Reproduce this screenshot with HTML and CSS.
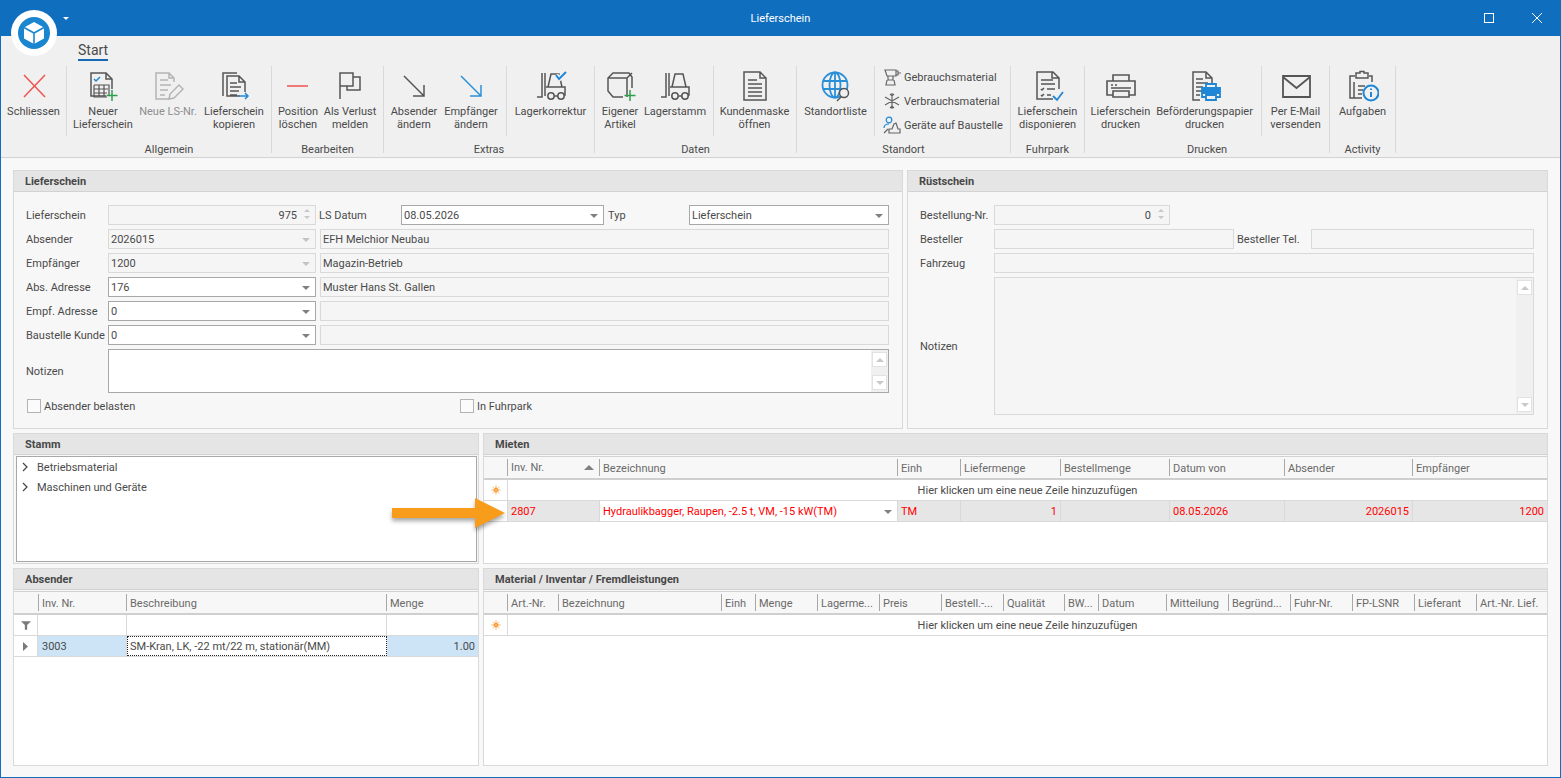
FILE: index.html
```html
<!DOCTYPE html>
<html>
<head>
  <meta charset="UTF-8">
  <title>Lieferschein</title>
  <link rel="stylesheet" href="styles.css">
</head>
<body>
  <svg class="sprites" xmlns="http://www.w3.org/2000/svg">
    <symbol id="forklift" viewBox="0 0 32 32">
      <path d="M7 3v24H2M10 3v23M13 17l3-13h8l3 13M11 17h19v8h-1M20 26h3"/>
      <circle cx="16" cy="26" r="3.2"/>
      <circle cx="26" cy="26" r="3.2"/>
    </symbol>
    <symbol id="sun" viewBox="0 0 12 12">
      <circle cx="6" cy="6" r="3" fill="#f7941d" stroke="none"/>
      <path d="M6 0v12M0 6h12M2 2l8 8M10 2l-8 8" stroke="#f9b56b" fill="none"/>
    </symbol>
  </svg>

  <!-- title bar -->
  <header class="titlebar">
    <span></span>
    <span class="title">Lieferschein</span>
    <div class="win-buttons">
      <span class="win-max"></span>
      <svg width="10" height="10" viewBox="0 0 10 10"><path d="M0 0l10 10M10 0L0 10" stroke="#fff" fill="none"/></svg>
    </div>
  </header>

  <!-- app logo over titlebar and ribbon -->
  <svg class="app-logo" width="46" height="46" viewBox="0 0 46 46">
    <circle cx="23" cy="23" r="23" fill="#fff"/>
    <circle cx="23" cy="23" r="16" fill="#1a86d0"/>
    <path d="M23 12l10 5.5v11L23 34l-10-5.5v-11z" fill="#fff"/>
    <path d="M13 17.5L23 23l10-5.5M23 23v11" stroke="#1a86d0" stroke-width="1.6" fill="none"/>
  </svg>
  <span class="app-caret"></span>

  <!-- ribbon -->
  <section class="ribbon">
    <div class="tabs"><span class="tab">Start</span></div>
    <div class="groups">
      <div class="rb-group g-close">
        <div class="rb-items">
          <div class="rb-item">
            <svg class="ic" viewBox="0 0 32 32"><path d="M6 5l21 22M27 5L6 27" stroke="#ef5350"/></svg>
            <span>Schliessen</span>
          </div>
          <i class="rb-sep"></i>
        </div>
      </div>

      <div class="rb-group g-allgemein">
        <div class="rb-items">
          <div class="rb-item">
            <svg class="ic" viewBox="0 0 32 32">
              <path d="M19 26H4V3h15l6 6v10M19 3v6h6"/>
              <path d="M7 15h15v11M7 15v12h13M7 19h14M7 23h13M12 15v11M17 15v11" stroke-width="1.2"/>
              <path d="M7 9l2 2 4-4" stroke="#1f87d6"/>
              <path d="M25 20v11M19.5 25.5h11" stroke="#2e9e4f"/>
            </svg>
            <span>Neuer<br>Lieferschein</span>
          </div>
          <div class="rb-item off">
            <svg class="ic" viewBox="0 0 32 32">
              <path d="M22 12V8l-5-5H4v26h13M17 3v5h5M8 10h8M8 15h11M8 20h8M8 25h5"/>
              <path d="M17 29l1-5 9-9 4 4-9 9z"/>
            </svg>
            <span>Neue LS-Nr.</span>
          </div>
          <div class="rb-item">
            <svg class="ic" viewBox="0 0 32 32">
              <path d="M5 26V3h14"/>
              <path d="M22 26H9V6h12l6 6v10M21 6v6h6M12 13h7M12 17h11M12 21h9M12 25h7"/>
              <path d="M21 26h9M27 23l3 3-3 3" stroke="#1f87d6"/>
            </svg>
            <span>Lieferschein<br>kopieren</span>
          </div>
        </div>
        <div class="rb-label">Allgemein</div>
      </div>

      <div class="rb-group g-bearbeiten">
        <div class="rb-items">
          <div class="rb-item">
            <svg class="ic" viewBox="0 0 32 32"><path d="M5 16h21" stroke="#ef5350"/></svg>
            <span>Position<br>löschen</span>
          </div>
          <div class="rb-item">
            <svg class="ic" viewBox="0 0 32 32"><path d="M6 29V3h13v13H6M19 7h7v13H13v-4"/></svg>
            <span>Als Verlust<br>melden</span>
          </div>
        </div>
        <div class="rb-label">Bearbeiten</div>
      </div>

      <div class="rb-group g-extras">
        <div class="rb-items">
          <div class="rb-item">
            <svg class="ic" viewBox="0 0 32 32"><path d="M6 6l20 20M26 15v11H15"/></svg>
            <span>Absender<br>ändern</span>
          </div>
          <div class="rb-item">
            <svg class="ic" viewBox="0 0 32 32"><path d="M6 6l20 20M26 15v11H15" stroke="#2b8fd8"/></svg>
            <span>Empfänger<br>ändern</span>
          </div>
          <i class="rb-sep"></i>
          <div class="rb-item">
            <svg class="ic" viewBox="0 0 32 32">
              <use href="#forklift"/>
              <path d="M21 5l3 4 7-7" stroke="#f0f0f0" stroke-width="5"/>
              <path d="M21 5l3 4 7-7" stroke="#1f87d6" stroke-width="2"/>
            </svg>
            <span>Lagerkorrektur</span>
          </div>
        </div>
        <div class="rb-label">Extras</div>
      </div>

      <div class="rb-group g-daten">
        <div class="rb-items">
          <div class="rb-item">
            <svg class="ic" viewBox="0 0 32 32">
              <path d="M19 27H9l-5-6V8l5-5h16l3 4v11M4 8h19v19M23 8l5-5"/>
              <path d="M26 20v11M20.500 25.500h11" stroke="#2e9e4f"/>
            </svg>
            <span>Eigener<br>Artikel</span>
          </div>
          <div class="rb-item">
            <svg class="ic" viewBox="0 0 32 32"><use href="#forklift"/></svg>
            <span>Lagerstamm</span>
          </div>
          <i class="rb-sep"></i>
          <div class="rb-item">
            <svg class="ic" viewBox="0 0 32 32">
              <path d="M21 2H5v28h22V8zM21 2v6h6M9 10h9M9 14h14M9 18h14M9 22h14M9 26h14" stroke-width="1.500"/>
            </svg>
            <span>Kundenmaske<br>öffnen</span>
          </div>
        </div>
        <div class="rb-label">Daten</div>
      </div>

      <div class="rb-group g-standort">
        <div class="rb-items">
          <div class="rb-item">
            <svg class="ic" viewBox="0 0 32 32">
              <g stroke="#2b8fd8" stroke-width="1.800">
                <circle cx="15" cy="15" r="12.500"/>
                <ellipse cx="15" cy="15" rx="5.500" ry="12.500"/>
                <path d="M3 11h24M3 19h24M15 2.500v25"/>
              </g>
              <circle cx="24" cy="23" r="4.500" fill="#f0f0f0"/>
              <path d="M21 27l-4 4"/>
            </svg>
            <span>Standortliste</span>
          </div>
          <i class="rb-sep"></i>
          <div class="rb-list">
            <div class="rb-small">
              <svg class="ic-s" viewBox="0 0 18 18"><path d="M2 2h11v6H4zM13 3h2v4h-2M15 5h3M5 8v4h5V8M4 12l-1 5h9l-1-5"/></svg>
              <span>Gebrauchsmaterial</span>
            </div>
            <div class="rb-small">
              <svg class="ic-s" viewBox="0 0 18 18"><path d="M9 1v16M2 5l14 8M16 5L2 13M7 2l2 2 2-2M7 16l2-2 2 2"/></svg>
              <span>Verbrauchsmaterial</span>
            </div>
            <div class="rb-small">
              <svg class="ic-s" viewBox="0 0 18 18">
                <circle cx="6" cy="4" r="2.800" stroke="#1f87d6"/>
                <path d="M1 12c0-3 2-4 5-4" stroke="#1f87d6"/>
                <path d="M6 17h11v-4h-2l-2-6-2 1-2 5H6zM1 17l4-4"/>
              </svg>
              <span>Geräte auf Baustelle</span>
            </div>
          </div>
        </div>
        <div class="rb-label">Standort</div>
      </div>

      <div class="rb-group g-fuhrpark">
        <div class="rb-items">
          <div class="rb-item">
            <svg class="ic" viewBox="0 0 32 32">
              <path d="M21 29H5V2h16l6 6v11M20 2v6h7M9 10h12M9 14h14M9 19l1 1 2-2M15 19h8M9 25l1 1 2-2M15 25h4"/>
              <path d="M21 26l4 4 6-8" stroke="#1f87d6" stroke-width="1.800"/>
            </svg>
            <span>Lieferschein<br>disponieren</span>
          </div>
        </div>
        <div class="rb-label">Fuhrpark</div>
      </div>

      <div class="rb-group g-drucken">
        <div class="rb-items">
          <div class="rb-item">
            <svg class="ic" viewBox="0 0 32 32">
              <path d="M8 11V5h16v6M8 25H2V11h28v14h-6M8 21h16v6H8zM6 15h2M10 15h2M6 18h20" stroke-width="1.600"/>
            </svg>
            <span>Lieferschein<br>drucken</span>
          </div>
          <div class="rb-item">
            <svg class="ic" viewBox="0 0 32 32">
              <path d="M11 30H4V2h13l6 6v6M17 2v6h6M7 9h7M7 13h12M7 17h7M7 21h6M7 25h4"/>
              <path d="M17 18v-4h10v4M17 27h-4v-9h18v9h-4M17 25h10v5H17z" stroke="#1f87d6" stroke-width="1.800"/>
              <path d="M13 19h18v5H13z" fill="#1f87d6" stroke="none"/>
            </svg>
            <span>Beförderungspapier<br>drucken</span>
          </div>
          <i class="rb-sep"></i>
          <div class="rb-item">
            <svg class="ic" viewBox="0 0 32 32">
              <path d="M3 6h27v21H3zM3 7l13.500 11L30 7" stroke-width="1.800"/>
            </svg>
            <span>Per E-Mail<br>versenden</span>
          </div>
        </div>
        <div class="rb-label">Drucken</div>
      </div>

      <div class="rb-group g-activity">
        <div class="rb-items">
          <div class="rb-item">
            <svg class="ic" viewBox="0 0 32 32">
              <path d="M11 28H3V6h5M22 6h3v6M9 3h4V1.500h4V3h4v5H9zM7 28h8M7 12v16"/>
              <path d="M11 16h7M11 20h5M11 24h4"/>
              <circle cx="24" cy="23" r="7.500" stroke="#1f87d6" stroke-width="2" fill="#f0f0f0"/>
              <path d="M24 22v5M24 18.500v1.500" stroke="#1f87d6" stroke-width="2"/>
            </svg>
            <span>Aufgaben</span>
          </div>
        </div>
        <div class="rb-label">Activity</div>
      </div>
    </div>
  </section>

  <main class="content">
    <div class="row-top">
      <!-- Lieferschein -->
      <section class="panel">
        <h3 class="panel-head">Lieferschein</h3>
        <div class="form">
          <div class="form-row">
            <label class="lbl">Lieferschein</label>
            <div class="field off num w-main">975<span class="spin"><i></i><i></i></span></div>
            <label class="lbl lbl-date">LS Datum</label>
            <div class="field combo w-date">08.05.2026</div>
            <label class="lbl lbl-typ">Typ</label>
            <div class="field combo grow">Lieferschein</div>
          </div>
          <div class="form-row">
            <label class="lbl">Absender</label>
            <div class="field off combo w-main">2026015</div>
            <div class="field off grow">EFH Melchior Neubau</div>
          </div>
          <div class="form-row">
            <label class="lbl">Empfänger</label>
            <div class="field off combo w-main">1200</div>
            <div class="field off grow">Magazin-Betrieb</div>
          </div>
          <div class="form-row">
            <label class="lbl">Abs. Adresse</label>
            <div class="field combo w-main">176</div>
            <div class="field off grow">Muster Hans St. Gallen</div>
          </div>
          <div class="form-row">
            <label class="lbl">Empf. Adresse</label>
            <div class="field combo w-main">0</div>
            <div class="field off grow"></div>
          </div>
          <div class="form-row">
            <label class="lbl">Baustelle Kunde</label>
            <div class="field combo w-main">0</div>
            <div class="field off grow"></div>
          </div>
          <div class="form-row notes-short">
            <label class="lbl">Notizen</label>
            <div class="memo grow">
              <div class="memo-bar"><b class="up"></b><b class="down"></b></div>
            </div>
          </div>
          <div class="check-row">
            <label class="check check-first"><i></i>Absender belasten</label>
            <label class="check"><i></i>In Fuhrpark</label>
          </div>
        </div>
      </section>

      <!-- Rüstschein -->
      <section class="panel">
        <h3 class="panel-head">Rüstschein</h3>
        <div class="form">
          <div class="form-row">
            <label class="lbl lbl-r">Bestellung-Nr.</label>
            <div class="field off num w-order">0<span class="spin"><i></i><i></i></span></div>
          </div>
          <div class="form-row tight">
            <label class="lbl lbl-r">Besteller</label>
            <div class="field off w-buyer"></div>
            <label class="lbl lbl-tel">Besteller Tel.</label>
            <div class="field off grow"></div>
          </div>
          <div class="form-row">
            <label class="lbl lbl-r">Fahrzeug</label>
            <div class="field off grow"></div>
          </div>
          <div class="form-row notes-tall">
            <label class="lbl lbl-r">Notizen</label>
            <div class="memo off grow">
              <div class="memo-bar"><b class="up"></b><b class="down"></b></div>
            </div>
          </div>
        </div>
      </section>
    </div>

    <div class="row-mid">
      <section class="panel">
        <h3 class="panel-head">Stamm</h3>
        <div class="tree">
          <div class="tree-item"><svg width="6" height="10" viewBox="0 0 6 10"><path d="M1 1l4 4-4 4" stroke="#444" fill="none" stroke-width="1.200"/></svg>Betriebsmaterial</div>
          <div class="tree-item"><svg width="6" height="10" viewBox="0 0 6 10"><path d="M1 1l4 4-4 4" stroke="#444" fill="none" stroke-width="1.200"/></svg>Maschinen und Geräte</div>
        </div>
      </section>

      <section class="panel">
        <h3 class="panel-head">Mieten</h3>
        <div class="grid">
          <div class="dg-head cols-mieten">
            <div></div>
            <div class="sorted">Inv. Nr.<i class="sort-up"></i></div>
            <div>Bezeichnung</div>
            <div>Einh</div>
            <div>Liefermenge</div>
            <div>Bestellmenge</div>
            <div>Datum von</div>
            <div>Absender</div>
            <div>Empfänger</div>
          </div>
          <div class="dg-new">
            <div class="dg-ind"><svg width="10" height="10"><use href="#sun"/></svg></div>
            <div class="dg-new-text">Hier klicken um eine neue Zeile hinzuzufügen</div>
          </div>
          <div class="dg-row cols-mieten row-red">
            <div class="dg-ind plain"></div>
            <div>2807</div>
            <div class="cell-edit combo-cell">Hydraulikbagger, Raupen, -2.5 t, VM, -15 kW(TM)</div>
            <div>TM</div>
            <div class="right">1</div>
            <div></div>
            <div>08.05.2026</div>
            <div class="right">2026015</div>
            <div class="right">1200</div>
          </div>
        </div>
      </section>
    </div>

    <div class="row-mid row-low">
      <section class="panel">
        <h3 class="panel-head">Absender</h3>
        <div class="grid">
          <div class="dg-head cols-absender">
            <div></div>
            <div>Inv. Nr.</div>
            <div>Beschreibung</div>
            <div>Menge</div>
          </div>
          <div class="dg-row cols-absender row-filter">
            <div class="dg-ind"><svg width="10" height="9" viewBox="0 0 13 11"><path d="M0 0h13L8 5v6H5V5z" fill="#7a7a7a"/></svg></div>
            <div></div><div></div><div></div>
          </div>
          <div class="dg-row cols-absender row-sel">
            <div class="dg-ind"><svg width="5" height="9" viewBox="0 0 5 9"><path d="M0 0l5 4.500L0 9z" fill="#7a7a7a"/></svg></div>
            <div>3003</div>
            <div class="cell-focus">SM-Kran, LK, -22 mt/22 m, stationär(MM)</div>
            <div class="right">1.00</div>
          </div>
        </div>
      </section>

      <section class="panel">
        <h3 class="panel-head">Material / Inventar / Fremdleistungen</h3>
        <div class="grid">
          <div class="dg-head cols-material">
            <div></div>
            <div>Art.-Nr.</div>
            <div>Bezeichnung</div>
            <div>Einh</div>
            <div>Menge</div>
            <div>Lagerme...</div>
            <div>Preis</div>
            <div>Bestell.-...</div>
            <div>Qualität</div>
            <div>BW...</div>
            <div>Datum</div>
            <div>Mitteilung</div>
            <div>Begründ...</div>
            <div>Fuhr-Nr.</div>
            <div>FP-LSNR</div>
            <div>Lieferant</div>
            <div>Art.-Nr. Lief.</div>
          </div>
          <div class="dg-new">
            <div class="dg-ind"><svg width="10" height="10"><use href="#sun"/></svg></div>
            <div class="dg-new-text">Hier klicken um eine neue Zeile hinzuzufügen</div>
          </div>
        </div>
      </section>
    </div>
  </main>

  <!-- callout arrow over the grid -->
  <svg class="callout" width="124" height="44" viewBox="0 0 124 44">
    <path d="M1 14h83V4l30 15-30 15V24H1z" fill="#f89c1c"/>
  </svg>
</body>
</html>
```

FILE: styles.css
```css
:root {
  --blue: #106ebe;
  --text: #4a4a4a;
  --line: #d9d9d9;
  --line-dark: #a8a8a8;
  --head: #e5e5e5;
}

* {
  margin: 0;
  padding: 0;
  box-sizing: border-box;
}

html, body {
  height: 778px;
}

body {
  position: relative;
  background: #f8f8f8;
  color: var(--text);
  font-family: 'Roboto', 'Noto Sans', sans-serif;
  font-size: 11px;
  line-height: 13px;
  border: solid var(--blue);
  border-width: 0 1px 1px;
  overflow: hidden;
}

.sprites {
  display: none;
}

/* title bar */
.titlebar {
  height: 36px;
  margin: 0 -1px;
  background: var(--blue);
  color: #fff;
  display: grid;
  grid-template-columns: 1fr auto 1fr;
  align-items: center;
}

.win-buttons {
  justify-self: end;
  display: flex;
  align-items: center;
  gap: 38px;
  padding-right: 19px;
}

.win-max {
  width: 10px;
  height: 10px;
  border: 1px solid #fff;
}

.app-logo {
  position: absolute;
  left: 10px;
  top: 10px;
}

.app-caret {
  position: absolute;
  left: 62px;
  top: 17px;
  border: 3px solid transparent;
  border-top-color: #fff;
}

/* ribbon */
.ribbon {
  height: 122px;
  background: #f0f0f0;
  border-bottom: 1px solid #d2d2d2;
}

.tabs {
  height: 30px;
  padding: 5px 0 0 77px;
}

.tab {
  display: inline-block;
  height: 20px;
  font-size: 14px;
  line-height: 19px;
  border-bottom: 2px solid #1668b4;
}

.groups {
  display: flex;
  height: 87px;
}

.rb-group {
  border-right: 1px solid var(--line);
}

.g-close { width: 66px; border-right: 0; }
.g-allgemein { width: 205px; }
.g-bearbeiten { width: 112px; }
.g-extras { width: 211px; }
.g-daten { width: 202px; }
.g-standort { width: 214px; }
.g-fuhrpark { width: 74px; }
.g-drucken { width: 245px; }
.g-activity { width: 66px; }

.rb-items {
  display: grid;
  height: 70px;
}

.g-close .rb-items { grid-template-columns: 65px 1px; }
.g-allgemein .rb-items { grid-template-columns: 72px 58px 74px; }
.g-bearbeiten .rb-items { grid-template-columns: 52px 52px; }
.g-extras .rb-items { grid-template-columns: 60px 54px 8px 1px 87px; }
.g-daten .rb-items { grid-template-columns: 50px 60px 8px 1px 81px; }
.g-standort .rb-items { grid-template-columns: 77px 1px 135px; }
.g-fuhrpark .rb-items { grid-template-columns: 73px; }
.g-drucken .rb-items { grid-template-columns: 71px 97px 8px 1px 67px; }
.g-activity .rb-items { grid-template-columns: 65px; }

/* the short separators: the spacer column in front of them stays empty */
.g-extras .rb-sep,
.g-daten .rb-sep,
.g-drucken .rb-sep {
  grid-column: 4;
}

.rb-sep {
  display: block;
  background: var(--line);
}

.rb-item {
  display: flex;
  flex-direction: column;
  align-items: center;
  text-align: center;
  white-space: nowrap;
  padding-top: 4px;
}

.rb-item span {
  margin-top: 3px;
}

.rb-item.off {
  color: #8e8e8e;
}

.ic {
  width: 32px;
  height: 32px;
  fill: none;
  stroke: #555;
  stroke-width: 1.5;
  flex: none;
}

.off .ic {
  stroke: #b4b4b4;
}

.rb-list {
  padding: 2px 0 0 8px;
  display: flex;
  flex-direction: column;
  gap: 6px;
}

.rb-small {
  display: flex;
  align-items: center;
  gap: 3px;
  height: 18px;
  white-space: nowrap;
}

.ic-s {
  width: 18px;
  height: 18px;
  fill: none;
  stroke: #666;
  stroke-width: 1.2;
  flex: none;
}

.rb-label {
  text-align: center;
  margin-top: 7px;
}

/* page */
.content {
  padding: 12px;
  display: flex;
  flex-direction: column;
  gap: 4px;
}

.row-top {
  display: grid;
  grid-template-columns: 890px 1fr;
  gap: 4px;
  height: 259px;
}

.row-mid {
  display: grid;
  grid-template-columns: 466px 1fr;
  gap: 4px;
  height: 131px;
}

.row-low {
  height: 198px;
}

.panel {
  border: 1px solid var(--line);
  background: #f7f7f7;
  display: flex;
  flex-direction: column;
  min-width: 0;
}

.panel-head {
  height: 21px;
  flex: none;
  background: var(--head);
  border-bottom: 1px solid #d2d2d2;
  font-size: 11px;
  font-weight: 700;
  line-height: 22px;
  padding-left: 11px;
  color: #484848;
}

/* forms */
.form {
  padding: 13px 13px 0 12px;
  display: flex;
  flex-direction: column;
  gap: 4px;
}

.form-row {
  display: flex;
  align-items: center;
  gap: 4px;
  height: 20px;
}

.form-row.tight {
  gap: 0;
}

.lbl {
  width: 78px;
  flex: none;
  white-space: nowrap;
}

.lbl-r {
  width: 70px;
}

.lbl-date {
  width: 78px;
  margin-left: -1px;
}

.lbl-typ {
  width: 77px;
}

.lbl-tel {
  width: 77px;
  padding-left: 3px;
}

.tight .lbl-r {
  width: 74px;
}

.field {
  height: 20px;
  border: 1px solid var(--line-dark);
  background: #fff;
  padding: 0 2px;
  line-height: 20px;
  white-space: nowrap;
  position: relative;
}

.field.off {
  border-color: var(--line);
  background: #f5f5f5;
}

.grow {
  flex: 1;
  min-width: 0;
}

.w-main { width: 208px; flex: none; }
.w-date { width: 203px; flex: none; }
.w-order { width: 176px; flex: none; }
.w-buyer { width: 240px; flex: none; }

.combo::after {
  content: "";
  position: absolute;
  right: 5px;
  top: 8px;
  border: 4px solid transparent;
  border-bottom: 0;
  border-top-color: #808080;
}

.combo.off::after {
  border-top-color: #c4c4c4;
}

.num {
  text-align: right;
  padding-right: 18px;
}

.spin {
  position: absolute;
  right: 5px;
  top: 3px;
  display: flex;
  flex-direction: column;
  gap: 4px;
}

.spin i {
  border: 3px solid transparent;
  border-top: 0;
  border-bottom: 3px solid #c8c8c8;
}

.spin i + i {
  border-bottom: 0;
  border-top: 3px solid #c8c8c8;
}

.notes-short {
  height: 44px;
}

.notes-tall {
  height: 138px;
}

.memo {
  height: 100%;
  border: 1px solid var(--line-dark);
  background: #fff;
  display: flex;
  justify-content: flex-end;
}

.memo.off {
  border-color: var(--line);
  background: #f5f5f5;
}

.memo-bar {
  width: 17px;
  background: #f0f0f0;
  padding: 2px 1px;
  display: flex;
  flex-direction: column;
  justify-content: space-between;
}

.memo-bar b {
  height: 15px;
  background: #fff;
  border: 1px solid #e2e2e2;
  position: relative;
}

.memo-bar b::after {
  content: "";
  position: absolute;
  left: 3px;
  top: 5px;
  border: 4px solid transparent;
}

.memo-bar .up::after {
  border-top: 0;
  border-bottom-color: #c8c8c8;
}

.memo-bar .down::after {
  border-bottom: 0;
  border-top-color: #c8c8c8;
}

.check-row {
  display: flex;
  margin: 2px 0 0 1px;
}

.check {
  display: flex;
  align-items: center;
  gap: 3px;
  height: 14px;
}

.check-first {
  width: 433px;
}

.check i {
  width: 14px;
  height: 14px;
  border: 1px solid #b4b4b4;
  background: #fbfbfb;
}

/* tree */
.tree {
  flex: 1;
  margin: 1px 1px 1px 2px;
  border: 1px solid var(--line-dark);
  background: #fff;
  padding: 0 0 0 5px;
}

.tree-item {
  height: 20px;
  display: flex;
  align-items: center;
  gap: 9px;
}

/* data grids */
.grid {
  flex: 1;
  background: #fff;
  margin-top: 1px;
  color: var(--text);
  min-height: 0;
}

.cols-mieten {
  grid-template-columns: 24px 92px 298px 63px 100px 109px 115px 128px 1fr;
}

.cols-absender {
  grid-template-columns: 25px 88px 260px 1fr;
}

.cols-material {
  grid-template-columns: 24px 51px 163px 34px 62px 62px 62px 62px 61px 34px 68px 62px 62px 62px 62px 62px 1fr;
}

.dg-head {
  display: grid;
  height: 24px;
  background: #f7f7f7;
  border-top: 1px solid #d2d2d2;
  border-bottom: 2px solid #cfcfcf;
  padding: 2px 0;
  color: #6a6a6a;
  line-height: 19px;
}

.dg-head > div {
  border-right: 1px solid #a8a8a8;
  padding-left: 3px;
  white-space: nowrap;
  overflow: hidden;
}

.dg-head > div:last-child {
  border-right: 0;
}

.sorted {
  display: flex;
  align-items: center;
  justify-content: space-between;
  padding-right: 5px;
}

.sort-up {
  border: 5px solid transparent;
  border-top: 0;
  border-bottom: 5px solid #808080;
}

.dg-new {
  display: flex;
  height: 21px;
  border-bottom: 1px solid var(--line);
}

.dg-ind {
  width: 24px;
  flex: none;
  display: flex;
  align-items: center;
  justify-content: center;
  border-right: 1px solid var(--line);
  background: #fff;
}

.dg-new-text {
  flex: 1;
  text-align: center;
  line-height: 22px;
}

.dg-row {
  display: grid;
  height: 21px;
  border-bottom: 1px solid var(--line);
  line-height: 22px;
}

.dg-row > div {
  padding: 0 3px;
  border-right: 1px solid var(--line);
  white-space: nowrap;
  overflow: hidden;
}

.dg-row > .dg-ind {
  padding: 0;
}

.dg-row > div:last-child {
  border-right: 0;
}

.right {
  text-align: right;
}

.row-red {
  color: #f00;
  background: #e6e6e6;
}

.cell-edit {
  background: #fff;
  position: relative;
}

.combo-cell::after {
  content: "";
  position: absolute;
  right: 5px;
  top: 9px;
  border: 4px solid transparent;
  border-bottom: 0;
  border-top-color: #808080;
}

.row-sel {
  background: #cce4f6;
}

.row-sel > .cell-focus {
  background: #fff;
  outline: 1px dotted #222;
  outline-offset: -1px;
  border-right: 0;
}

.callout {
  position: absolute;
  left: 390px;
  top: 494px;
  filter: drop-shadow(0 3px 2px rgba(0, 0, 0, 0.35));
}
```
